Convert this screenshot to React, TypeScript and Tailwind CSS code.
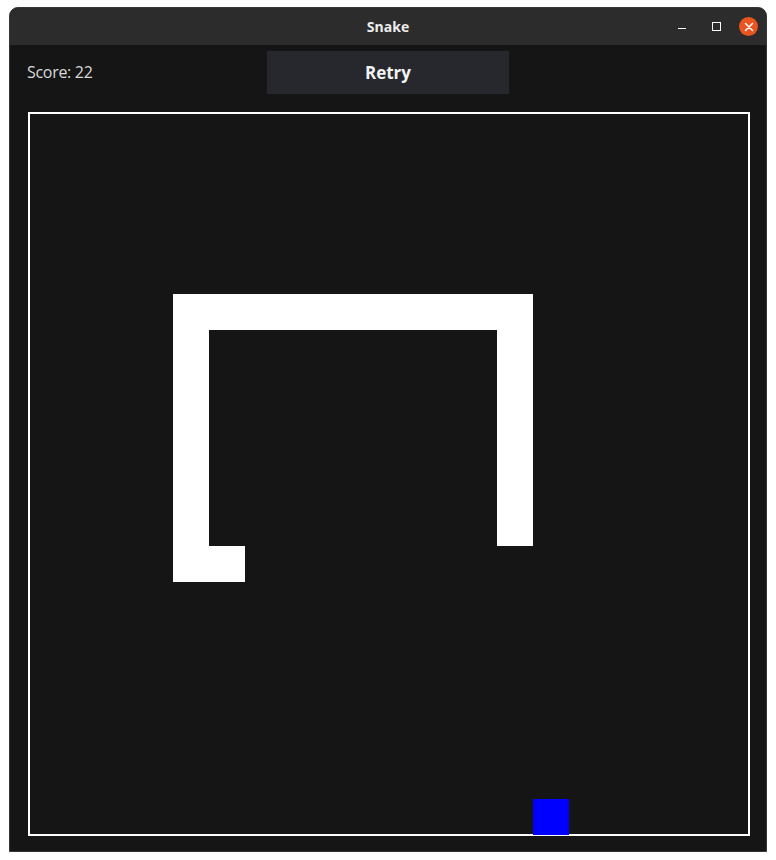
import React from "react";

const cells = [
  { l: 143, t: 180, w: 360, h: 36, c: "bg-white" },
  { l: 143, t: 180, w: 36, h: 288, c: "bg-white" },
  { l: 143, t: 432, w: 72, h: 36, c: "bg-white" },
  { l: 467, t: 180, w: 36, h: 252, c: "bg-white" },
  { l: 503, t: 685, w: 36, h: 36, c: "bg-[#0000ff]" },
];

export default function App() {
  return (
    <div className="w-[776px] h-[860px] bg-white pl-[9px] pt-[7px]" style={{ fontFamily: '"Open Sans", "Noto Sans", sans-serif' }}>
      <div className="w-[758px] h-[845px] rounded-t-[9px] border border-[#363636] overflow-hidden bg-[#151515] flex flex-col">
        <div className="relative h-[37px] shrink-0 bg-[#2c2c2c] flex items-center justify-center">
          <span className="text-[14px] font-bold text-[#ececec] leading-none">Snake</span>
          <div className="absolute right-[8px] top-0 h-full flex items-center">
            <div className="w-[22px] flex justify-center items-center h-[20px]">
              <div className="w-[8px] h-[1px] bg-white mt-[4px]" />
            </div>
            <div className="w-[22px] ml-[12px] flex justify-center items-center h-[20px]">
              <div className="w-[9px] h-[9px] border border-white" />
            </div>
            <div className="ml-[12px] w-[19px] h-[19px] rounded-full bg-[#e95420] flex items-center justify-center">
              <svg width="10" height="10" viewBox="0 0 10 10">
                <path d="M1.5 1.5 L8.5 8.5 M8.5 1.5 L1.5 8.5" stroke="white" strokeWidth="1.5" strokeLinecap="round" />
              </svg>
            </div>
          </div>
        </div>
        <div className="flex flex-col">
          <div className="flex pt-[6px]">
            <div className="w-[257px] pl-[17px] pt-[9px]">
              <span className="text-[16px] tracking-[-0.3px] text-[#d9d9d9] leading-[24px]">Score: 22</span>
            </div>
            <button className="w-[242px] h-[43px] bg-[#27282d] text-[#f2f2f2] text-[17px] font-bold flex items-center justify-center">
              Retry
            </button>
          </div>
          <div className="ml-[18px] mt-[18px] w-[722px] h-[724px] border-2 border-white relative">
            {cells.map((c, i) => (
              <div
                key={i}
                className={`absolute ${c.c}`}
                style={{ left: c.l, top: c.t, width: c.w, height: c.h }}
              />
            ))}
          </div>
        </div>
      </div>
    </div>
  );
}
